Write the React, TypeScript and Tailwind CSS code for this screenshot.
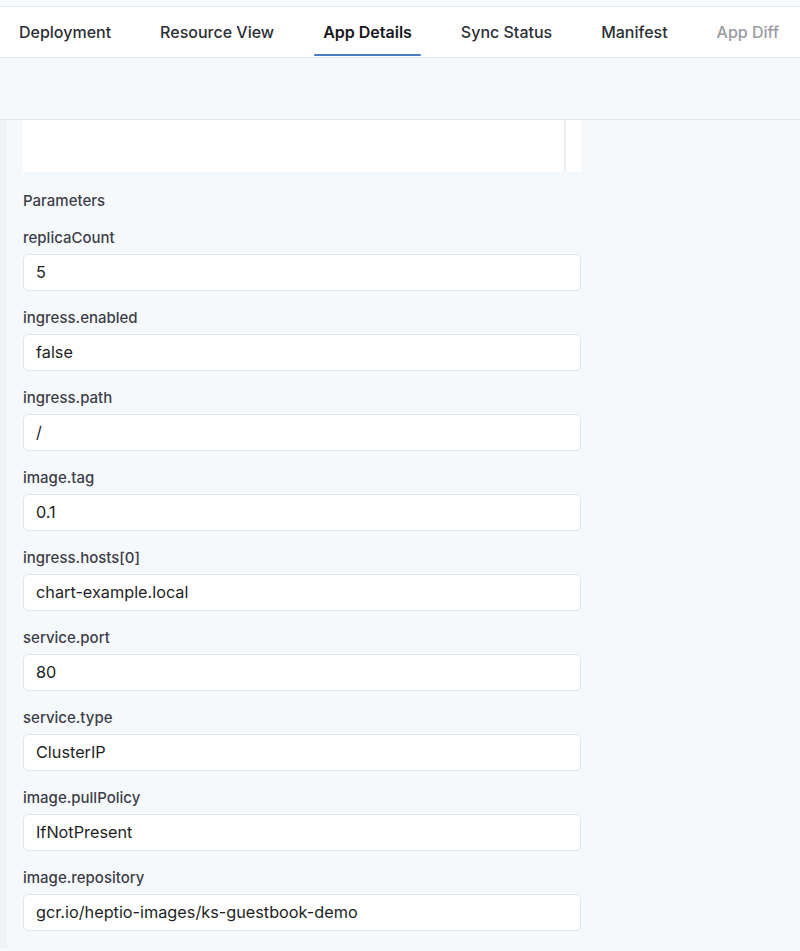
const tabs = [
  { label: "Deployment" },
  { label: "Resource View" },
  { label: "App Details", active: true },
  { label: "Sync Status" },
  { label: "Manifest" },
  { label: "App Diff", disabled: true },
];

const params = [
  ["replicaCount", "5"],
  ["ingress.enabled", "false"],
  ["ingress.path", "/"],
  ["image.tag", "0.1"],
  ["ingress.hosts[0]", "chart-example.local"],
  ["service.port", "80"],
  ["service.type", "ClusterIP"],
  ["image.pullPolicy", "IfNotPresent"],
  ["image.repository", "gcr.io/heptio-images/ks-guestbook-demo"],
];

export default function App() {
  return (
    <div
      className="min-h-[951px] w-[800px] bg-[#f6f9fc] overflow-hidden"
      style={{ fontFamily: "Inter, 'Noto Sans', sans-serif" }}
    >
      {/* top strip */}
      <div className="h-[7px] bg-[#f7f9fc] border-b border-[#e6e8ec]" />

      {/* TABS */}
      <div className="h-[51px] bg-white border-b border-[#e6e9ee] flex items-stretch pl-[10px] gap-[31px]">
        {tabs.map((t) => (
          <div
            key={t.label}
            className={`relative px-[9px] flex items-center text-[16px] whitespace-nowrap ${
              t.active
                ? "font-semibold text-[#16181d]"
                : t.disabled
                ? "font-medium text-[#9a9ca3]"
                : "font-medium text-[#2c2f36]"
            }`}
          >
            <span>{t.label}</span>
            {t.active && (
              <div className="absolute left-0 right-0 bottom-[1px] h-[2px] bg-[#4a7dc3] rounded-full" />
            )}
          </div>
        ))}
      </div>

      {/* toolbar strip */}
      <div className="h-[62px] bg-[#f6f8fb] border-b border-[#e3e6ea]" />

      {/* CONTENT */}
      <div className="flex">
        <div className="w-[7px] shrink-0 bg-[#f1f3f6]" />
        <div className="flex-1 pl-[16px]">
          <div className="w-[558px] h-[52px] bg-white flex justify-end">
            <div className="w-[2px] h-full bg-[#eeeff1] mr-[15px]" />
          </div>

          <div className="mt-[19px] text-[15px] leading-[20px] font-medium text-[#3d4049]">
            Parameters
          </div>

          <div className="mt-[17px] w-[558px]">
            {params.map(([name, value]) => (
              <div key={name} className="mb-[17px]">
                <div className="text-[15px] leading-[20px] font-medium text-[#3d4049]">
                  {name}
                </div>
                <div className="mt-[6px] h-[37px] bg-white border border-[#e3e5e9] rounded-[5px] flex items-center px-[12px] text-[16.25px] text-[#1d1f24]">
                  {value}
                </div>
              </div>
            ))}
          </div>
        </div>
      </div>
    </div>
  );
}
